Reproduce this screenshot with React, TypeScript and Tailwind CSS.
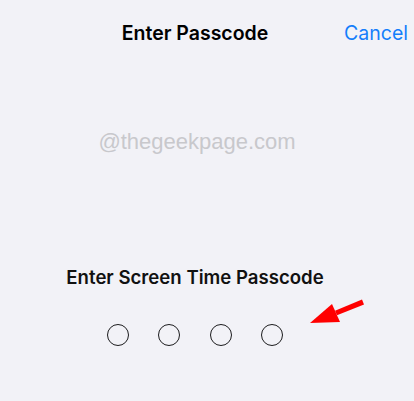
export default function App() {
  const dots = [0, 1, 2, 3]

  return (
    <main className="relative h-[401px] w-[414px] overflow-hidden bg-[#f2f2f7] pr-[24px] font-['Inter','Noto_Sans',sans-serif]">
      {/* Nav bar */}
      <header className="mt-[20px] flex h-[26px] items-center">
        <div className="flex-1" />
        <h1 className="text-[19.5px] font-semibold leading-[26px] text-black">Enter Passcode</h1>
        <div className="flex flex-1 justify-end">
          <button className="-mr-[18px] text-[19.5px] leading-[26px] text-[#147efb]">Cancel</button>
        </div>
      </header>

      {/* Watermark */}
      <p className="mt-[83px] pl-[4px] text-center font-['Liberation_Sans',Arial,sans-serif] text-[22px] leading-[26px] text-[#c8c8cc]">
        @thegeekpage.com
      </p>

      <h2 className="mt-[110px] text-center text-[18.6px] font-semibold leading-[25px] text-[#111]">
        Enter Screen Time Passcode
      </h2>

      <div className="mt-[34px] flex justify-center gap-[29.5px]">
        {dots.map((d) => (
          <span key={d} className="block h-[22px] w-[22px] rounded-full border-[1.5px] border-[#1c1c1e]" />
        ))}
      </div>

      {/* Red annotation arrow */}
      <svg
        className="absolute left-[300px] top-[290px]"
        width="75"
        height="40"
        viewBox="0 0 75 40"
      >
        <polygon points="64,14.5 62,9.5 35,20.7 37,25.3" fill="#ff0000" />
        <polygon points="10,33 32,14 40,32" fill="#ff0000" />
      </svg>
    </main>
  )
}
